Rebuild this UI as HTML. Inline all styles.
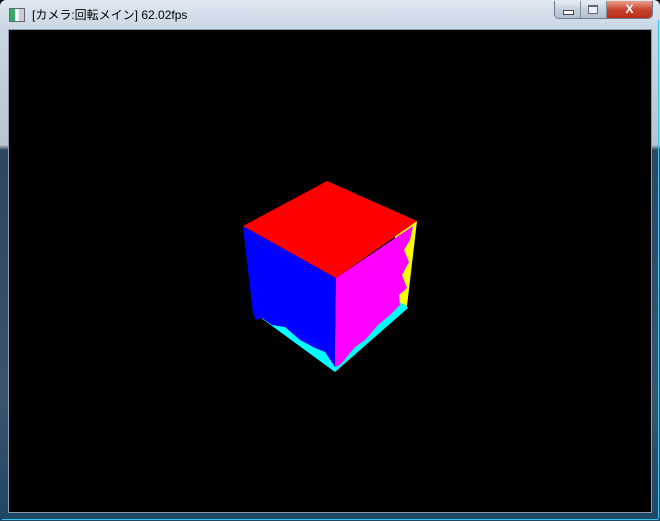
<!DOCTYPE html>
<html><head><meta charset="utf-8"><style>
html,body{margin:0;padding:0;width:660px;height:521px;overflow:hidden;background:#000}
.frame{position:absolute;left:0;top:0;width:660px;height:521px;border-radius:6px 6px 0 0;
background:linear-gradient(to bottom,#dfe8f1 0px,#c9d6e3 30px,#b9c5d0 145px,#2c4760 150px,#38546f 400px,#1e4766 521px);}
.frame::after{content:"";position:absolute;right:1px;top:20px;width:1px;bottom:2px;background:#35c8f0}
.bottomline{position:absolute;left:2px;right:2px;bottom:1px;height:1px;background:#35c8f0}
.client{position:absolute;left:9px;top:30px;width:642px;height:482px;background:#000;outline:1px solid #8a9cad}
.title{position:absolute;left:32px;top:6px;font:12px "Liberation Sans","Noto Sans CJK JP",sans-serif;color:#000}
.icon{position:absolute;left:9px;top:8px;width:14px;height:12px;border:1px solid #667;background:linear-gradient(to right,#3a6 0 35%,#fff 35% 60%,#ccd 60%)}
.btns{position:absolute;left:554px;top:1px;height:17px;width:97px;border:1px solid #6a7a8c;border-top:none;border-radius:0 0 5px 5px;overflow:hidden;display:flex}
.b{height:17px;background:linear-gradient(#e6edf4,#c4d0dd 50%,#b3c1d0);border-right:1px solid #7d8ea0;position:relative}
.c{flex:1;background:linear-gradient(#e9a08c,#c8452e 50%,#b92e1a);color:#fff;font:bold 12px "Liberation Sans",sans-serif;text-align:center;line-height:17px}
</style></head><body>
<div class="frame"></div>
<div class="bottomline"></div>
<div class="icon"></div>
<div class="title">[カメラ:回転メイン] 62.02fps</div>
<div class="btns">
 <div class="b" style="width:25px"><div style="position:absolute;left:8px;top:9px;width:9px;height:3px;background:#fff;border:1px solid #445"></div></div>
 <div class="b" style="width:25px"><div style="position:absolute;left:7px;top:4px;width:8px;height:6px;border:1px solid #667;border-top-width:2px;background:#eef"></div></div>
 <div class="c">X</div>
</div>
<div class="client"></div>
<svg width="660" height="521" style="position:absolute;left:0;top:0">
<polygon fill="#0ff" points="253,312 335,372 408,308 400,296 336,296 260,300"/>
<polygon fill="#ff0" points="417,221 407,306 395,300 395,230"/>
<polygon fill="#00f" points="243,226 336,278 335,367 325,352 315,348 300,340 285,327 272,325 262,318 256,320 253,314"/>
<polygon fill="#f0f" points="336,278 413,226 410,240 404,250 409,262 402,275 407,288 399,295 400,305 390,315 378,325 365,340 355,347 340,365 335,367"/>
<polygon fill="#f00" points="327,181 417,221 336,278 243,226"/>
</svg>
</body></html>
